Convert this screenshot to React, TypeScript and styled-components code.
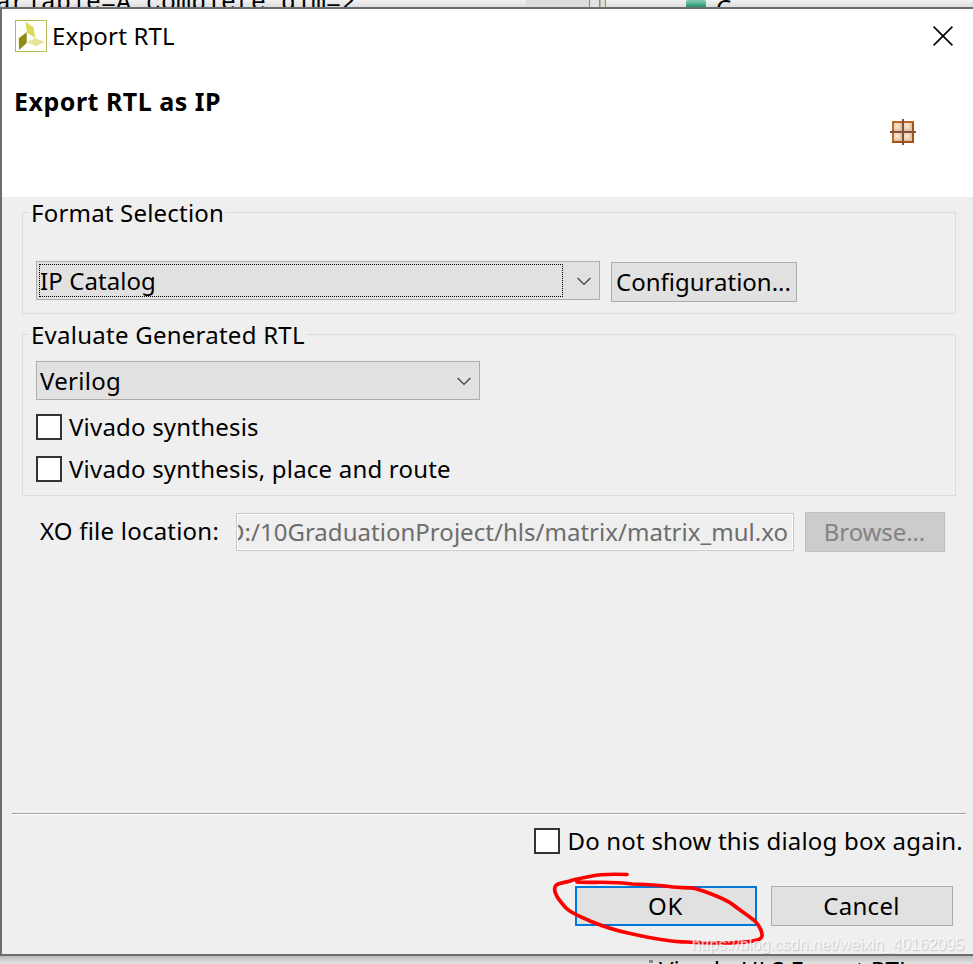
import React from "react";
import styled, { createGlobalStyle } from "styled-components";

const Global = createGlobalStyle`
  * { box-sizing: border-box; }
  body { margin: 0; background: #efefef; overflow: hidden; }
`;

const Screen = styled.div`
  position: relative;
  display: flex;
  flex-direction: column;
  width: 973px;
  height: 964px;
  overflow: hidden;
  font: 24px/32px "Noto Sans", "Open Sans", sans-serif;
  color: #000;
`;

const EditorStrip = styled.div`
  flex: 0 0 7px;
  display: flex;
  overflow: hidden;
  background: linear-gradient(#f2f2f2, #dcdcdc);
`;

const Code = styled.div`
  width: 526px;
  margin-left: -4px;
  font: 25px/28px "Liberation Mono", monospace;
  white-space: pre;
  margin-top: -10px;
`;

const Gutter = styled.div`
  width: 63px;
  margin-left: 4px;
  background: #dcdcdc;
`;

const Splitter = styled.div`
  width: 17px;
  border: solid #8b8b8b;
  border-width: 0 1px;
  background: linear-gradient(90deg, #e2e2e2 9px, #8b8b8b 9px 10px, #e2dec8 11px);
`;

const OutlineDot = styled.div`
  width: 20px;
  height: 20px;
  margin: -3px 0 0 80px;
  border-radius: 6px;
  background: linear-gradient(#7cc8aa 4px, #2f9b75 9px);
`;

const OutlineText = styled.div`
  margin: -8px 0 0 10px;
`;

const TaskStrip = styled.div`
  flex: 1;
  display: flex;
  overflow: hidden;
  padding-left: 649px;
  background: linear-gradient(#bcbcbc, #e4e4e4);
`;

const TaskMark = styled.div`
  width: 4px;
  height: 3px;
  margin: 4px 6px 0 0;
  background: #8d8984;
`;

const TaskText = styled.div`
  height: 32px;
  margin-top: -2px;
  white-space: nowrap;
`;

const Dialog = styled.div`
  flex: 0 0 949px;
  display: flex;
  flex-direction: column;
  border: solid #6c6d6f;
  border-width: 2px 0 2px 2px;
  background: #efefef;
`;

const Header = styled.header`
  flex: 0 0 188px;
  display: flex;
  flex-direction: column;
  background: #fff;
`;

const TitleBar = styled.div`
  display: flex;
  align-items: flex-start;
  padding: 11px 20px 0 13px;
`;

const Title = styled.div`
  flex: 1;
  margin-left: 5px;
  letter-spacing: 0.18px;
`;

const CloseIcon = styled.svg`
  margin-top: 6px;
`;

const Banner = styled.div`
  display: flex;
  align-items: flex-start;
  justify-content: space-between;
  padding: 33px 57px 0 12px;
`;

const Heading = styled.h1`
  margin: 0;
  font-size: 25px;
  line-height: 32px;
  font-weight: 700;
  letter-spacing: 0.5px;
`;

const PackageIcon = styled.svg`
  margin-top: 34px;
`;

const Group = styled.section<{ $top: number; $height: number }>`
  flex: none;
  display: flex;
  flex-direction: column;
  align-items: flex-start;
  height: ${(p) => p.$height}px;
  margin: ${(p) => p.$top}px 17px 0 20px;
  padding: 0 13px;
  border: 1px solid #dcdcdc;
`;

const Legend = styled.h2<{ $spacing: number }>`
  height: 32px;
  margin: -16px 0 0 -7px;
  padding: 0 1px 0 2px;
  background: #efefef;
  font: inherit;
  letter-spacing: ${(p) => p.$spacing}px;
`;

const FormatRow = styled.div`
  display: flex;
  margin-top: 32px;
`;

const Combo = styled.div<{ $width: number; $top?: number }>`
  display: flex;
  align-items: center;
  justify-content: space-between;
  width: ${(p) => p.$width}px;
  height: 39px;
  margin-top: ${(p) => p.$top ?? 0}px;
  padding: 2px 8px 2px 2px;
  border: 1px solid #adadad;
  background: #e1e1e1;
`;

const ComboValue = styled.div<{ $focused?: boolean; $spacing: number }>`
  width: ${(p) => (p.$focused ? "524px" : "auto")};
  height: 33px;
  border: 1px ${(p) => (p.$focused ? "dotted #000" : "solid transparent")};
  line-height: 32px;
  letter-spacing: ${(p) => p.$spacing}px;
`;

const Button = styled.button<{ $width: number; $default?: boolean; $spacing?: number }>`
  display: flex;
  justify-content: center;
  align-items: center;
  width: ${(p) => p.$width}px;
  height: 40px;
  padding: 0 1px 0 0;
  border: ${(p) => (p.$default ? "2px solid #0078d7" : "1px solid #adadad")};
  background: #e1e1e1;
  color: #000;
  font: inherit;
  letter-spacing: ${(p) => p.$spacing ?? 0}px;

  &:disabled {
    border-color: #bfbfbf;
    background: #cccccc;
    color: #838383;
  }
`;

const ConfigButton = styled(Button)`
  margin: 1px 0 0 11px;
`;

const CheckRow = styled.label<{ $top: number; $spacing: number; $right?: number }>`
  display: flex;
  align-items: center;
  height: 26px;
  margin: ${(p) => p.$top}px ${(p) => p.$right ?? 0}px 0 0;
  line-height: 26px;
  letter-spacing: ${(p) => p.$spacing}px;
  white-space: nowrap;
`;

const CheckBox = styled.span`
  width: 26px;
  height: 26px;
  margin-right: 7px;
  border: 2px solid #333;
  background: #fff;
`;

const FileRow = styled.div`
  display: flex;
  margin: 16px 28px 0 38px;
`;

const FileLabel = styled.div`
  width: 196px;
  margin-top: 3px;
  letter-spacing: 0.22px;
`;

const PathField = styled.div`
  display: flex;
  width: 558px;
  height: 38px;
  margin: 1px 11px 0 0;
  border: 1px solid #c8c8c8;
  padding: 1px;
  background: #fff;
`;

const PathText = styled.div`
  display: flex;
  justify-content: flex-end;
  width: 100%;
  overflow: hidden;
  padding-top: 1px;
  border-right: 4px solid #efefef;
  background: #efefef;
  color: #6d6d6d;
  letter-spacing: 0.03px;
  white-space: nowrap;
`;

const Footer = styled.footer`
  display: flex;
  flex-direction: column;
  align-items: flex-end;
  margin: auto 7px 28px 10px;
  border-top: 1px solid #a0a0a0;
  box-shadow: inset 0 1px #fff;
`;

const Actions = styled.div`
  display: flex;
  gap: 14px;
  margin: 32px 13px 0 0;
`;

const Mark = styled.svg`
  position: absolute;
  left: 545px;
  top: 865px;
`;

const Watermark = styled.div`
  position: absolute;
  right: 9px;
  top: 934px;
  font: 16px/22px "Liberation Sans", sans-serif;
  color: rgba(255, 255, 255, 0.75);
  text-shadow: 1px 1px 1px rgba(120, 120, 120, 0.35);
`;

const Chevron = () => (
  <svg width="14" height="11" viewBox="0 -2 14 11" fill="none" stroke="#404040" strokeWidth="1.3">
    <path d="M0.6 1 L7 7.4 L13.4 1" />
  </svg>
);

const Logo = () => (
  <svg width="32" height="32" viewBox="0 0 32 32">
    <rect x="0.5" y="0.5" width="31" height="31" fill="#fff" stroke="#b5b85a" />
    <path d="M10.3 1.5 L18.8 7.5 L20 18 L12 12.5Z" fill="#dbdc55" />
    <path d="M3.8 18.2 L11.7 12.3 L11.7 23 L4 30Z" fill="#8e8d10" />
    <path d="M12 22.2 L20 18 L29.7 22 L21 26.6Z" fill="#e5e796" />
  </svg>
);

const Package = () => (
  <PackageIcon width="26" height="26" viewBox="0 0 13 13" shapeRendering="crispEdges">
    <path d="M1 1h11v11H1z" fill="#b86a20" />
    <path d="M1 11h11v1H1zM11 2h1v10h-1z" fill="#a35412" />
    <path d="M2 2h9v9H2z" fill="#dcae8e" />
    <path d="M2 2h4v4H2zM7 2h4v4H7zM2 7h4v4H2zM7 7h4v4H7z" fill="#e6c3a6" />
    <path d="M2 2h3v3H2zM7 2h3v3H7zM2 7h3v3H2zM7 7h3v3H7z" fill="#efd8bf" />
    <path d="M3 3h1v1H3zM8 3h1v1H8zM3 8h1v1H3zM8 8h1v1H8z" fill="#fff4b4" />
    <path d="M6 0h1v13H6zM0 6h13v1H0z" fill="#805040" />
  </PackageIcon>
);

export default function App() {
  return (
    <Screen>
      <Global />
      <EditorStrip>
        <Code>ariable=A complete dim=2</Code>
        <Gutter />
        <Splitter />
        <OutlineDot />
        <OutlineText>C</OutlineText>
      </EditorStrip>
      <Dialog>
        <Header>
          <TitleBar>
            <Logo />
            <Title>Export RTL</Title>
            <CloseIcon width="20" height="20" viewBox="0 0 20 20" stroke="#000" strokeWidth="1.6">
              <path d="M0.6 0.6 L19.4 19.4 M19.4 0.6 L0.6 19.4" />
            </CloseIcon>
          </TitleBar>
          <Banner>
            <Heading>Export RTL as IP</Heading>
            <Package />
          </Banner>
        </Header>
        <Group $top={15} $height={102}>
          <Legend $spacing={0.2}>Format Selection</Legend>
          <FormatRow>
            <Combo $width={564}>
              <ComboValue $focused $spacing={0.08}>IP Catalog</ComboValue>
              <Chevron />
            </Combo>
            <ConfigButton $width={186}>Configuration...</ConfigButton>
          </FormatRow>
        </Group>
        <Group $top={20} $height={162}>
          <Legend $spacing={0.25}>Evaluate Generated RTL</Legend>
          <Combo $width={444} $top={10}>
            <ComboValue $spacing={0.3}>Verilog</ComboValue>
            <Chevron />
          </Combo>
          <CheckRow $top={14} $spacing={0.2}>
            <CheckBox />
            Vivado synthesis
          </CheckRow>
          <CheckRow $top={16} $spacing={0.2}>
            <CheckBox />
            Vivado synthesis, place and route
          </CheckRow>
        </Group>
        <FileRow>
          <FileLabel>XO file location:</FileLabel>
          <PathField>
            <PathText>D:/10GraduationProject/hls/matrix/matrix_mul.xo</PathText>
          </PathField>
          <Button $width={140} $spacing={-0.1} disabled>
            Browse...
          </Button>
        </FileRow>
        <Footer>
          <CheckRow $top={14} $spacing={0.21} $right={3}>
            <CheckBox />
            Do not show this dialog box again.
          </CheckRow>
          <Actions>
            <Button $width={182} $default $spacing={0.8}>OK</Button>
            <Button $width={182} $spacing={0.3}>Cancel</Button>
          </Actions>
        </Footer>
      </Dialog>
      <TaskStrip>
        <TaskMark />
        <TaskText>Vivado HLS Export RTL</TaskText>
      </TaskStrip>
      <Mark width="225" height="85" viewBox="545 865 225 85" fill="none" stroke="#fe0000" strokeWidth="3.7" strokeLinecap="round" strokeLinejoin="round">
        <path d="M627 874.5 C612 874 600 874 592 876 C583 878 575 879 570 881 C563 883 556 883 555 887 C553 893 559 900 566 908 C572 914 582 917 590 921 C602 926 614 930 628 933 C650 938 670 942 687 942 C700 943 718 943 732 943 C743 942 757 942 761 938 C764 935 760 926 755 921 C745 913 738 909 732 904 C724 898 704 891 695 888.5 C688 887 680 888 673 887 C660 885 646 884.5 632 884 C612 881 592 883 577 882" />
      </Mark>
      <Watermark>https://blog.csdn.net/weixin_40162095</Watermark>
    </Screen>
  );
}
